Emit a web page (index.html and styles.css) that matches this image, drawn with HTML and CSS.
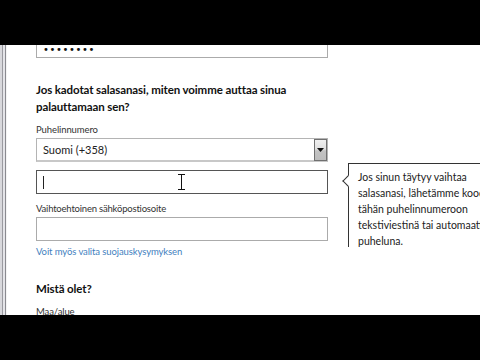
FILE: index.html
```html
<!DOCTYPE html>
<html lang="fi">
<head>
<meta charset="utf-8">
<link rel="stylesheet" href="styles.css">
</head>
<body>
<div class="bar"></div>
<div class="screen">
  <div class="frame"></div>
  <div class="content">
    <div class="field pass"><span class="dots">••••••••</span></div>
    <h2 class="heading">Jos kadotat salasanasi, miten voimme auttaa sinua<br>palauttamaan sen?</h2>
    <div class="label">Puhelinnumero</div>
    <div class="select">
      <span class="sel-text">Suomi (+358)</span>
      <span class="sel-btn"><svg width="7" height="4" viewBox="0 0 7 4"><path d="M0 0H7L3.5 4Z" fill="#111"/></svg></span>
    </div>
    <div class="field focus">
      <span class="caret"></span>
      <svg class="ibeam" width="7" height="16" viewBox="0 0 7 16"><path d="M0 .5H7M0 15.5H7M3.5 .5V15.5" stroke="#111" stroke-width="1" fill="none"/></svg>
    </div>
    <div class="label alt">Vaihtoehtoinen sähköpostiosoite</div>
    <div class="field email"></div>
    <div class="link">Voit myös valita suojauskysymyksen</div>
    <h2 class="heading sub">Mistä olet?</h2>
    <div class="label last">Maa/alue</div>
  </div>
  <div class="tip">
    <span class="notch"></span>
    <p>Jos sinun täytyy vaihtaa<br>salasanasi, lähetämme koodin<br>tähän puhelinnumeroon<br>tekstiviestinä tai automaattisena<br>puheluna.</p>
  </div>
</div>
<div class="bar"></div>
</body>
</html>
```
FILE: styles.css
```css
html, body {
  margin: 0;
  padding: 0;
  background: #000;
  width: 480px;
  height: 360px;
  overflow: hidden;
  font-family: "Lato", "Open Sans", sans-serif;
  color: #222;
}
.bar {
  height: 45px;
  background: #000;
}
.screen {
  position: relative;
  height: 270px;
  background: #fff;
  display: flex;
  overflow: hidden;
}
.frame {
  width: 7px;
  flex: none;
  background: linear-gradient(to right, #d8d8dc 0, #d8d8dc 2px, #9a9aa0 2px, #9a9aa0 3px, #e4e4e8 3px, #e4e4e8 5px, #8a8a90 5px, #8a8a90 6px, #f4f4f4 6px);
}
.content {
  flex: 1;
  padding-left: 29px;
  margin-top: -11px;
  display: flex;
  flex-direction: column;
  align-items: flex-start;
}
.content > * {
  flex-shrink: 0;
}
.field {
  box-sizing: border-box;
  width: 292px;
  height: 24px;
  border: 1px solid #ababab;
  background: #fff;
  display: flex;
  align-items: center;
  position: relative;
}
.pass {
  padding-left: 6px;
}
.dots {
  font-family: "DejaVu Sans", sans-serif;
  font-size: 10px;
  letter-spacing: 0.6px;
  color: #111;
  padding-top: 6px;
}
.heading {
  margin: 23px 0 0;
  font-size: 11.5px;
  letter-spacing: -0.1px;
  line-height: 17px;
  font-weight: 700;
  color: #111;
  white-space: nowrap;
}
.label {
  margin-top: 8px;
  font-size: 9.5px;
  letter-spacing: -0.1px;
  line-height: 14px;
  color: #333;
}
.label.alt {
  margin-top: 8px;
  letter-spacing: -0.2px;
}
.select {
  box-sizing: border-box;
  width: 292px;
  height: 24px;
  margin-top: 1px;
  border: 1px solid #b4b4b4;
  border-bottom: 2px solid #c8c8c8;
  display: flex;
  align-items: center;
  justify-content: space-between;
  padding-left: 6px;
}
.sel-text {
  font-size: 11px;
  color: #222;
}
.sel-btn {
  box-sizing: border-box;
  width: 13px;
  height: 22px;
  border: 1px solid #707070;
  background: linear-gradient(#f0f0f0, #e0e0e0 45%, #c2c2c2 55%, #bdbdbd);
  display: flex;
  align-items: center;
  justify-content: center;
  align-self: flex-start;
}
.focus {
  margin-top: 8px;
  border-color: #555;
}
.caret {
  width: 1px;
  height: 13px;
  background: #222;
  margin-left: 6px;
}
.ibeam {
  position: absolute;
  left: 141px;
  top: 3px;
}
.email {
  margin-top: 1px;
}
.link {
  margin-top: 4px;
  font-size: 9.5px;
  letter-spacing: -0.1px;
  line-height: 14px;
  color: #3f7fc0;
}
.heading.sub {
  margin-top: 21px;
}
.label.last {
  margin-top: 8px;
}
.tip {
  position: absolute;
  left: 348px;
  top: 118px;
  width: 200px;
  height: 84px;
  box-sizing: border-box;
  border-left: 1px solid #333;
  border-top: 1px solid #333;
  background: #fff;
  padding: 5px 0 0 9px;
}
.tip p {
  margin: 0;
  font-size: 10.5px;
  line-height: 16px;
  color: #222;
  white-space: nowrap;
}
.notch {
  position: absolute;
  left: -5px;
  top: 13px;
  width: 7px;
  height: 7px;
  background: #fff;
  border-left: 1px solid #333;
  border-bottom: 1px solid #333;
  transform: rotate(45deg);
}
```
